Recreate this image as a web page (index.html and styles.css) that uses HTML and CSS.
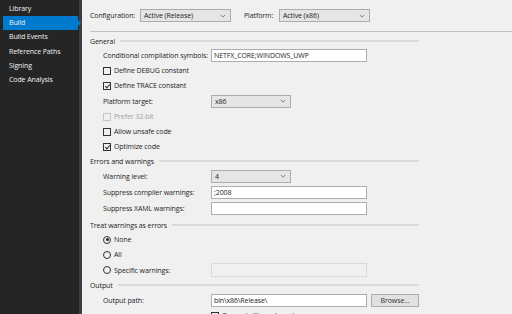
FILE: index.html
```html
<!DOCTYPE html>
<html lang="en">

<head>
    <meta charset="UTF-8">
    <title>Build</title>
    <link rel="stylesheet" href="styles.css">
</head>

<body>
    <div class="app">
        <ul class="nav">
            <li>Library</li>
            <li class="active">Build</li>
            <li>Build Events</li>
            <li>Reference Paths</li>
            <li>Signing</li>
            <li>Code Analysis</li>
        </ul>

        <div class="main">
            <div class="topbar">
                <span class="lbl">Configuration:</span>
                <div class="select w-cfg">Active (Release)<svg viewBox="0 0 8 5"><path d="M1 1l3 3 3-3"/></svg></div>
                <span class="lbl plat">Platform:</span>
                <div class="select w-cfg">Active (x86)<svg viewBox="0 0 8 5"><path d="M1 1l3 3 3-3"/></svg></div>
            </div>

            <div class="section">
                <div class="head first">General</div>
                <div class="row">
                    <span class="label">Conditional compilation symbols:</span>
                    <div class="input">NETFX_CORE;WINDOWS_UWP</div>
                </div>
                <div class="row"><span class="check"></span>Define DEBUG constant</div>
                <div class="row"><span class="check on"></span>Define TRACE constant</div>
                <div class="row tall">
                    <span class="label">Platform target:</span>
                    <div class="select w-sm">x86<svg viewBox="0 0 8 5"><path d="M1 1l3 3 3-3"/></svg></div>
                </div>
                <div class="row off"><span class="check"></span>Prefer 32-bit</div>
                <div class="row"><span class="check"></span>Allow unsafe code</div>
                <div class="row"><span class="check on"></span>Optimize code</div>
            </div>

            <div class="section">
                <div class="head">Errors and warnings</div>
                <div class="row tall">
                    <span class="label">Warning level:</span>
                    <div class="select w-sm">4<svg viewBox="0 0 8 5"><path d="M1 1l3 3 3-3"/></svg></div>
                </div>
                <div class="row tall">
                    <span class="label">Suppress compiler warnings:</span>
                    <div class="input">;2008</div>
                </div>
                <div class="row tall">
                    <span class="label">Suppress XAML warnings:</span>
                    <div class="input"></div>
                </div>
            </div>

            <div class="section">
                <div class="head gap">Treat warnings as errors</div>
                <div class="row"><span class="radio on"></span>None</div>
                <div class="row"><span class="radio"></span>All</div>
                <div class="row tall">
                    <span class="label"><span class="radio"></span>Specific warnings:</span>
                    <div class="input disabled"></div>
                </div>
            </div>

            <div class="section">
                <div class="head">Output</div>
                <div class="row tall">
                    <span class="label">Output path:</span>
                    <div class="input">bin\x86\Release\</div>
                    <div class="button">Browse...</div>
                </div>
                <div class="row sub"><span class="check"></span>Generate library layout</div>
            </div>
        </div>
    </div>
</body>

</html>
```

FILE: styles.css
```css
* {
    margin: 0;
    padding: 0;
    list-style: none;
    box-sizing: border-box;
}

body {
    width: 512px;
    height: 314px;
    overflow: hidden;
    font-family: "Open Sans", "Noto Sans", sans-serif;
    font-size: 7px;
    letter-spacing: -0.1px;
    white-space: nowrap;
    color: #1e1e1e;
    background: #f0f0f0;
}

.app {
    display: flex;
    height: 100%;
}

/* left tabs */
.nav {
    width: 82px;
    flex-shrink: 0;
    padding-top: 2px;
    background: #252526;
    border-right: 3px solid #3e3e42;
}

.nav li {
    position: relative;
    height: 14.2px;
    line-height: 14.2px;
    margin-left: 3px;
    margin-right: 1px;
    padding-left: 6px;
    color: #f1f1f1;
}

.nav li.active {
    background: #007acc;
}

.nav li.active::after {
    content: "";
    position: absolute;
    right: -3px;
    top: 4px;
    border-left: 3px solid #007acc;
    border-top: 3px solid transparent;
    border-bottom: 3px solid transparent;
}

.main {
    flex: 1;
    padding-left: 8px;
}

.topbar {
    display: flex;
    align-items: center;
    height: 32px;
    border-bottom: 1px solid #c2c2c2;
}

.topbar .lbl {
    width: 50px;
}

.topbar .plat {
    width: 35px;
    margin-left: 13px;
}

.select {
    display: flex;
    align-items: center;
    justify-content: space-between;
    height: 13px;
    padding: 0 4px 0 3px;
    background: #e5e5e5;
    border: 1px solid #acacac;
}

.select svg {
    width: 6px;
    height: 4px;
    fill: none;
    stroke: #606060;
    stroke-width: 1;
}

.w-cfg {
    width: 91px;
}

.w-sm {
    width: 80px;
}

.section {
    width: 329px;
}

.head {
    display: flex;
    align-items: center;
    height: 14px;
}

.head::after {
    content: "";
    flex: 1;
    height: 2px;
    margin-left: 5px;
    background: #dadada;
}

.head.first {
    margin-top: 2px;
}

.head.gap {
    margin-top: 2px;
}

.row {
    display: flex;
    align-items: center;
    height: 15px;
    padding-left: 13px;
}

.row.tall {
    height: 16px;
}

.row.off {
    color: #a2a2a2;
}

.row.sub {
    height: 12px;
    align-items: flex-end;
    padding-left: 121px;
}

.label {
    display: flex;
    align-items: center;
    width: 108px;
    flex-shrink: 0;
}

.input {
    width: 156px;
    height: 13px;
    line-height: 11px;
    padding-left: 2px;
    background: #fff;
    border: 1px solid #abadb3;
}

.input.disabled {
    height: 14px;
    background: #f0f0f0;
    border-color: #d9d9d9;
}

.button {
    width: 48px;
    height: 13px;
    margin-left: 4px;
    line-height: 11px;
    text-align: center;
    color: #333;
    background: #e1e1e1;
    border: 1px solid #adadad;
}

.check {
    position: relative;
    width: 8px;
    height: 8px;
    margin-right: 3px;
    border: 1px solid #333;
}

.row.off .check {
    border-color: #c6c6c6;
}

.check.on::after {
    content: "";
    position: absolute;
    left: 1.5px;
    top: 0;
    width: 2px;
    height: 4px;
    border-right: 1px solid #333;
    border-bottom: 1px solid #333;
    transform: rotate(40deg);
}

.radio {
    position: relative;
    width: 8px;
    height: 8px;
    margin-right: 3px;
    border: 1px solid #333;
    border-radius: 50%;
}

.radio.on::after {
    content: "";
    position: absolute;
    left: 1.5px;
    top: 1.5px;
    width: 3px;
    height: 3px;
    border-radius: 50%;
    background: #1e1e1e;
}
```
